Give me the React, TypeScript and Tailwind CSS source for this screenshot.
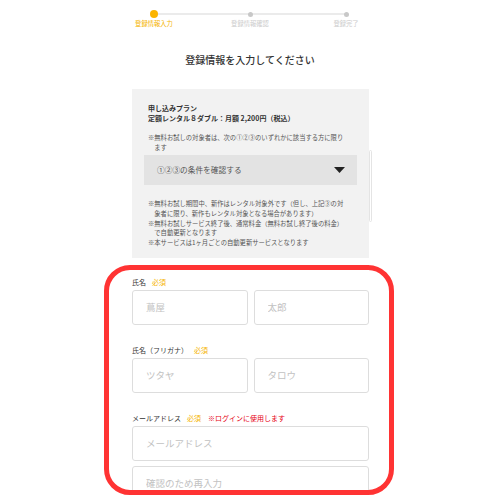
import React from 'react'

const steps = [
  { label: '登録情報入力', active: true },
  { label: '登録情報確認', active: false },
  { label: '登録完了', active: false },
]

function Required() {
  return <span className="ml-[6px] text-[#f5b400]">必須</span>
}

function Field({ placeholder }: { placeholder: string }) {
  return (
    <input
      readOnly
      placeholder={placeholder}
      className="h-[35px] w-full rounded-[3px] border border-[#dddddd] bg-white pl-[13px] text-[9.5px] outline-none placeholder:text-[#c2c2c2]"
    />
  )
}

export default function App() {
  return (
    <div className="h-[500px] w-[500px] overflow-hidden bg-white font-['Noto_Sans_CJK_JP',sans-serif] text-[#333333]">
      {/* Steps */}
      <div className="relative ml-[106px] grid w-[288px] grid-cols-3 pt-[10px]">
        <div className="absolute left-[48px] right-[48px] top-[13px] h-[2px] bg-[#ebebeb]" />
        {steps.map((s) => (
          <div key={s.label} className="relative flex flex-col items-center">
            <div className="flex h-[8px] items-center">
              {s.active ? (
                <div className="h-[8px] w-[8px] rounded-full bg-[#fbb400]" />
              ) : (
                <div className="h-[5px] w-[5px] rounded-full bg-[#c8c8c8]" />
              )}
            </div>
            <div
              className={
                s.active
                  ? 'mt-[2px] text-[6.3px] leading-[8px] text-[#f5b400]'
                  : 'mt-[2px] text-[6.3px] leading-[8px] text-[#cccccc]'
              }
            >
              {s.label}
            </div>
          </div>
        ))}
      </div>

      {/* Title */}
      <h1 className="mt-[25px] text-center text-[10px] font-medium leading-[14px]">
        登録情報を入力してください
      </h1>

      {/* Plan box */}
      <div className="relative mt-[22px] ml-[132px] w-[237px] bg-[#f2f2f2] px-[16px] pt-[14px] pb-[10px]">
        <div className="absolute right-[-3px] top-[61px] h-[72px] w-[3px] rounded-full border border-[#e4e4e4] bg-white" />
        <p className="text-[7px] font-bold leading-[10px]">申し込みプラン</p>
        <p className="text-[7px] font-bold leading-[10px]">定額レンタル８ダブル：月額 2,200円（税込）</p>
        <p className="mt-[10px] whitespace-nowrap pl-[6.3px] indent-[-6.3px] text-[6.3px] leading-[9.5px] text-[#555555]">
          ※無料お試しの対象者は、次の①②③のいずれかに該当する方に限り
          <br />
          ます
        </p>
        <div className="-mx-[4px] mt-[3px] flex h-[30px] items-center justify-between bg-[#e3e3e3] pl-[13px] pr-[12px]">
          <span className="text-[7.7px] text-[#555555]">①②③の条件を確認する</span>
          <svg width="11" height="6" viewBox="0 0 11 6">
            <path d="M0 0h11L5.5 6z" fill="#222222" />
          </svg>
        </div>
        <div className="mt-[14px] whitespace-nowrap text-[6.3px] leading-[9.75px] text-[#555555]">
          <p className="pl-[6.3px] indent-[-6.3px]">
            ※無料お試し期間中、新作はレンタル対象外です（但し、上記③の対
            <br />
            象者に限り、新作もレンタル対象となる場合があります）
          </p>
          <p className="pl-[6.3px] indent-[-6.3px]">
            ※無料お試しサービス終了後、通常料金（無料お試し終了後の料金）
            <br />
            で自動更新となります
          </p>
          <p>※本サービスは1ヶ月ごとの自動更新サービスとなります</p>
        </div>
      </div>

      {/* Form */}
      <div className="mt-[7px] ml-[104px] h-[230px] w-[290px] overflow-hidden rounded-[26px] border-[5px] border-[#ff3333] bg-white pl-[23px] pt-[7px]">
        <div className="w-[237px]">
          <label className="mb-[3px] block text-[7px] leading-[10px]">
            氏名
            <Required />
          </label>
          <div className="grid grid-cols-2 gap-[6px]">
            <Field placeholder="蔦屋" />
            <Field placeholder="太郎" />
          </div>

          <label className="mt-[20px] mb-[3px] block text-[7px] leading-[10px]">
            氏名（フリガナ）
            <Required />
          </label>
          <div className="grid grid-cols-2 gap-[6px]">
            <Field placeholder="ツタヤ" />
            <Field placeholder="タロウ" />
          </div>

          <label className="mt-[20px] mb-[3px] block text-[7px] leading-[10px]">
            メールアドレス
            <Required />
            <span className="ml-[7px] text-[#e60012]">※ログインに使用します</span>
          </label>
          <Field placeholder="メールアドレス" />
          <div className="mt-[5px]">
            <Field placeholder="確認のため再入力" />
          </div>
        </div>
      </div>
    </div>
  )
}
